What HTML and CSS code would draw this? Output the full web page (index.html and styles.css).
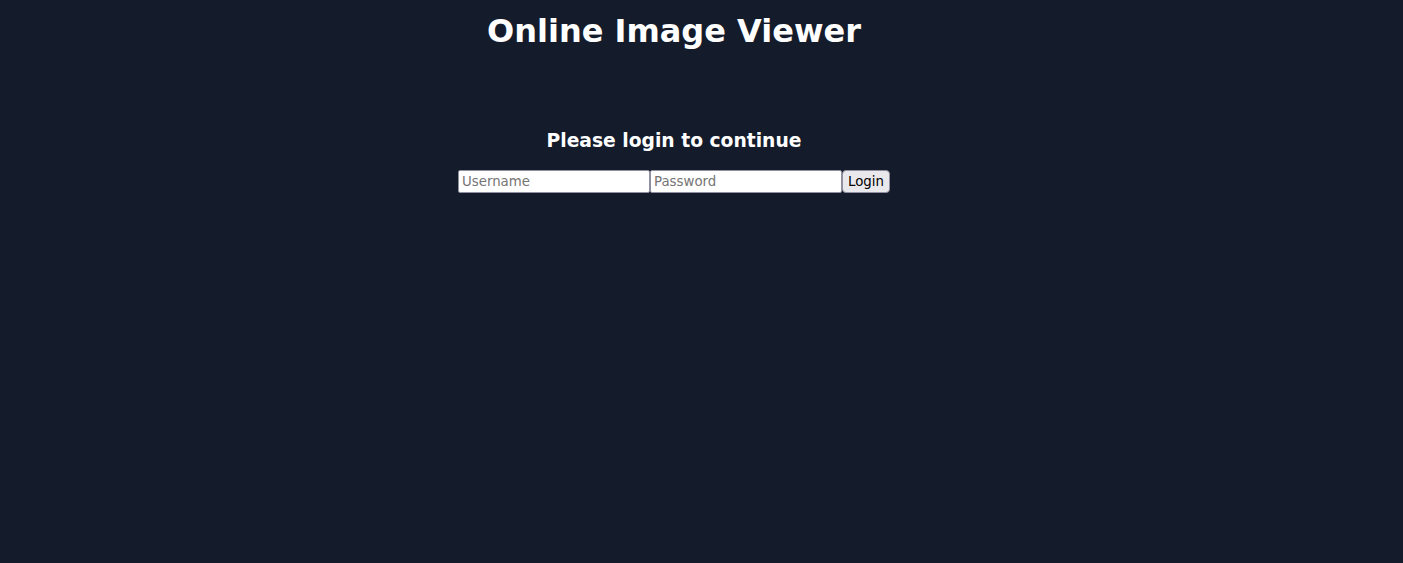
FILE: index.html
```html
<!DOCTYPE html>
<html>
<head>
<meta charset="utf-8">
<title>Online Image Viewer</title>
<link rel="stylesheet" href="styles.css">
</head>
<body>
<div class="app">
  <h1 class="title">Online Image Viewer</h1>
  <div class="login">
    <h2 class="prompt">Please login to continue</h2>
    <form class="login-form"><input class="field" type="text" placeholder="Username"><input class="field" type="password" placeholder="Password"><button class="btn" type="button">Login</button></form>
  </div>
</div>
</body>
</html>
```
FILE: styles.css
```css
html, body {
  margin: 0;
  background: #141c2b;
  height: 100%;
}
body {
  font-family: "DejaVu Sans", sans-serif;
  color: #ffffff;
}
.app {
  padding: 0 55px 0 0;
  text-align: center;
}
.title {
  font-size: 32px;
  margin: 0;
  padding-top: 12px;
}
.login {
  margin-top: 80px;
}
.prompt {
  font-size: 18.72px;
  margin: 0 0 19px;
}
.login-form {
  margin: 0;
  display: flex;
  justify-content: center;
}
.field {
  font-family: "DejaVu Sans", sans-serif;
  font-size: 13.33px;
  box-sizing: border-box;
  width: 192px;
  height: 23px;
  margin: 0;
  padding: 1px 3px;
  border: 1px solid #8f8f9d;
  border-radius: 2px;
  background: #ffffff;
  color: #000000;
}
.field::placeholder {
  color: #757575;
}
.btn {
  font-family: "DejaVu Sans", sans-serif;
  font-size: 13.33px;
  box-sizing: border-box;
  width: 48px;
  height: 23px;
  margin: 0;
  padding: 1px 4px;
  border: 1px solid #8f8f9d;
  border-radius: 4px;
  background: #e9e9ed;
  color: #000000;
}
```
